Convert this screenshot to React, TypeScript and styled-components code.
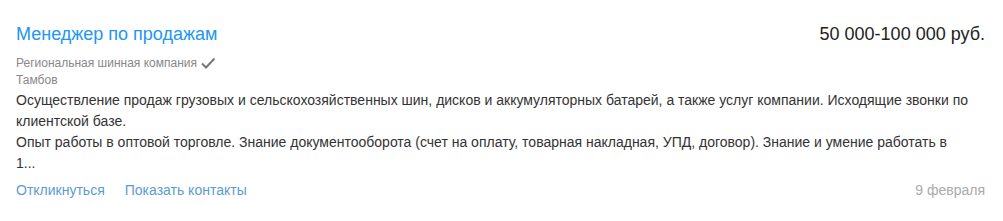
import React from "react";
import styled, { createGlobalStyle } from "styled-components";

const GlobalStyle = createGlobalStyle`
  body {
    margin: 0;
    background: #fff;
    font-family: "Liberation Sans", Arial, sans-serif;
  }
`;

const Card = styled.div`
  width: 1003px;
  box-sizing: border-box;
  padding: 22px 18px 0 16px;
`;

const Header = styled.div`
  display: flex;
  justify-content: space-between;
  align-items: baseline;
`;

const Title = styled.a`
  font-size: 18px;
  line-height: 24px;
  color: #2196f3;
  text-decoration: none;
`;

const Salary = styled.div`
  font-size: 18px;
  line-height: 24px;
  color: #222;
`;

const Meta = styled.div<{ $top?: number }>`
  display: flex;
  align-items: center;
  gap: 3px;
  font-size: 12px;
  line-height: 17px;
  color: #888;
  margin-top: ${(p) => p.$top ?? 0}px;
`;

const Description = styled.div`
  margin-top: 1.5px;
  padding-right: 10px;
  font-size: 14px;
  line-height: 21px;
  color: #333;
`;

const Footer = styled.div`
  display: flex;
  align-items: baseline;
  margin-top: 6px;
  font-size: 14px;
  line-height: 21px;
`;

const Action = styled.a`
  color: #5b9bd5;
  text-decoration: none;
  margin-right: 20px;
`;

const DateText = styled.span`
  margin-left: auto;
  color: #aaa;
`;

const Check = () => (
  <svg width="16" height="14" viewBox="0 0 16 14">
    <path d="M2 7.5 L6 11.5 L14.5 2.5" fill="none" stroke="#777" strokeWidth="2" />
  </svg>
);

export default function App() {
  return (
    <>
      <GlobalStyle />
      <Card>
        <Header>
          <Title href="#">Менеджер по продажам</Title>
          <Salary>50 000-100 000 руб.</Salary>
        </Header>
        <Meta $top={8.5}>
          Региональная шинная компания <Check />
        </Meta>
        <Meta>Тамбов</Meta>
        <Description>
          Осуществление продаж грузовых и сельскохозяйственных шин, дисков и аккумуляторных батарей, а также услуг компании. Исходящие звонки по клиентской базе.
          <br />
          Опыт работы в оптовой торговле. Знание документооборота (счет на оплату, товарная накладная, УПД, договор). Знание и умение работать в
          <br />
          1...
        </Description>
        <Footer>
          <Action href="#">Откликнуться</Action>
          <Action href="#">Показать контакты</Action>
          <DateText>9 февраля</DateText>
        </Footer>
      </Card>
    </>
  );
}
